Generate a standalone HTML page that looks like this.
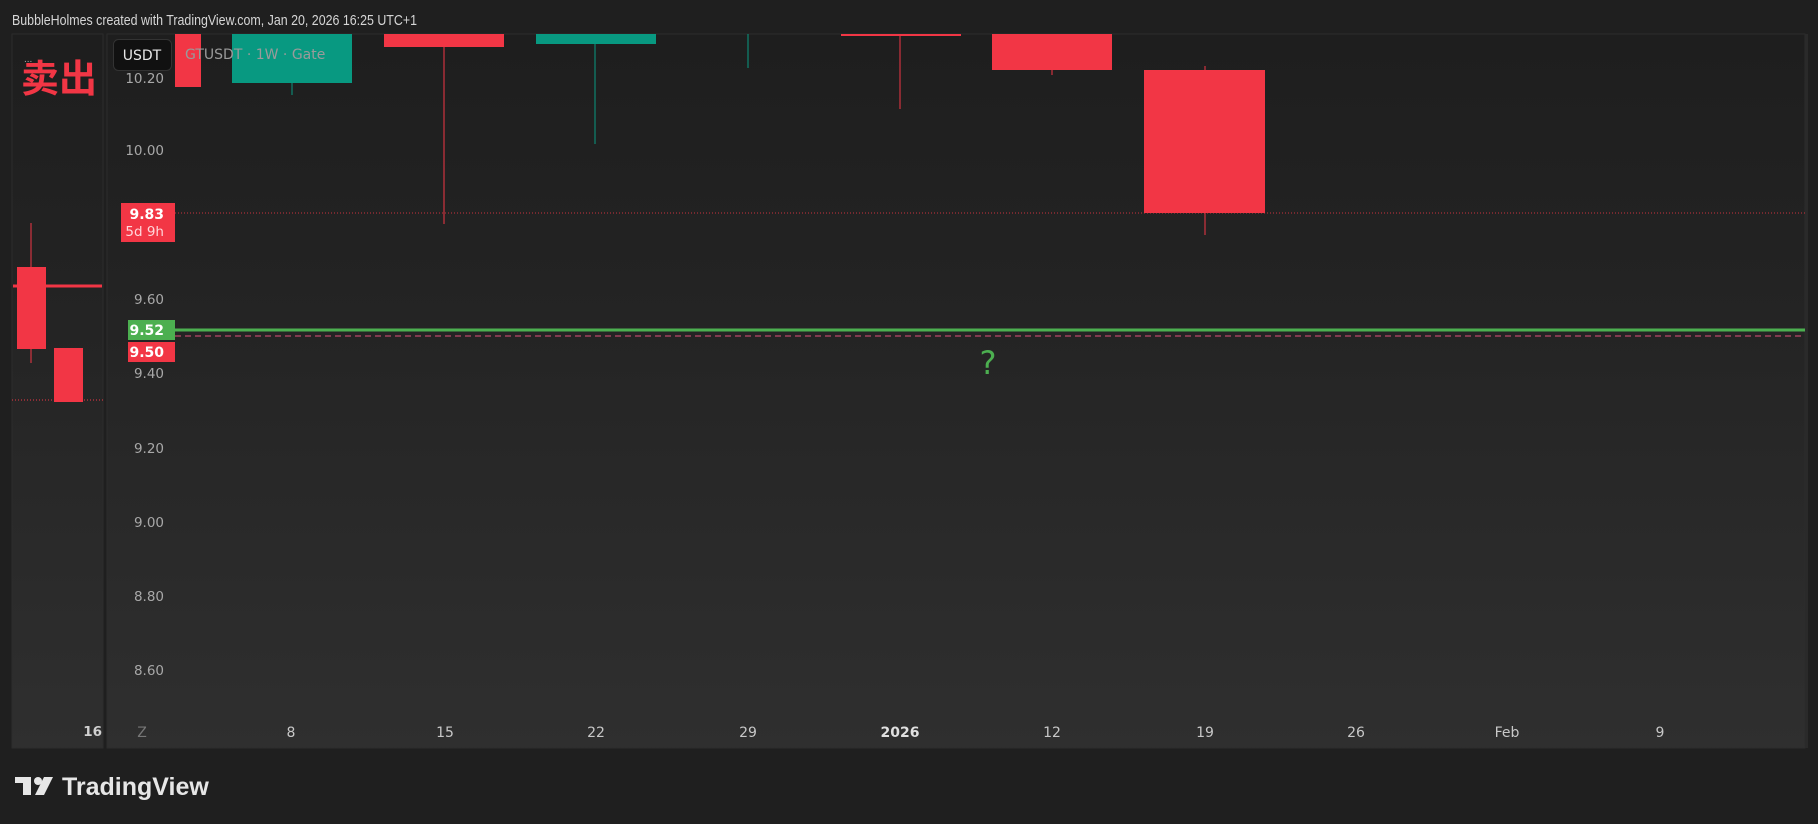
<!DOCTYPE html>
<html><head><meta charset="utf-8"><style>
html,body{margin:0;padding:0;background:#1f1f1f;width:1818px;height:824px;overflow:hidden;font-family:"Liberation Sans","Noto Sans CJK SC",sans-serif}
</style></head><body>
<svg width="1818" height="824" viewBox="0 0 1818 824" xmlns="http://www.w3.org/2000/svg" style="position:absolute;left:0;top:0">
<defs>
<linearGradient id="bg" x1="0" y1="0" x2="0" y2="1">
<stop offset="0" stop-color="#1e1e1e"/><stop offset="0.35" stop-color="#232323"/><stop offset="1" stop-color="#2f2f2f"/>
</linearGradient>
</defs>
<rect width="1818" height="824" fill="#1f1f1f"/>
<text x="12" y="25" fill="#d6d6d6" font-size="14.5" font-family="Liberation Sans, sans-serif" textLength="405" lengthAdjust="spacingAndGlyphs">BubbleHolmes created with TradingView.com, Jan 20, 2026 16:25 UTC+1</text>
<rect x="12" y="34" width="91" height="714" fill="url(#bg)" stroke="#2c2c2c" stroke-width="1"/>
<rect x="107" y="34" width="1698" height="714" fill="url(#bg)" stroke="#2c2c2c" stroke-width="1"/>
<rect x="1805" y="34" width="3" height="714" fill="#2a2a2a"/>
<line x1="31" y1="223" x2="31" y2="363" stroke="#f23645" stroke-width="1"/>
<rect x="17" y="267" width="29" height="82" fill="#f23645"/>
<line x1="13" y1="286" x2="102" y2="286" stroke="#f23645" stroke-width="3"/>
<rect x="54" y="348" width="29" height="54" fill="#f23645"/>
<line x1="12" y1="400" x2="103" y2="400" stroke="#f23645" stroke-width="1" stroke-dasharray="1,2"/>
<text x="21" y="92" fill="#f23645" font-size="38" font-weight="bold" font-family="Noto Sans CJK SC, sans-serif">卖出</text>
<text x="24" y="62" fill="#aaa" font-size="10">...</text>
<text x="102" y="736" fill="#d0d0d0" font-size="13.5" font-weight="bold" text-anchor="end" font-family="DejaVu Sans, sans-serif">16</text>
<rect x="175" y="34" width="26" height="53" fill="#f23645"/>
<line x1="292" y1="34" x2="292" y2="95" stroke="#089981"/>
<rect x="232" y="34" width="120" height="49" fill="#089981"/>
<line x1="444" y1="34" x2="444" y2="224" stroke="#f23645"/>
<rect x="384" y="34" width="120" height="13" fill="#f23645"/>
<line x1="595" y1="34" x2="595" y2="144" stroke="#089981"/>
<rect x="536" y="34" width="120" height="10" fill="#089981"/>
<line x1="748" y1="34" x2="748" y2="68" stroke="#089981"/>
<line x1="900" y1="34" x2="900" y2="109" stroke="#f23645"/>
<rect x="841" y="34" width="120" height="2" fill="#f23645"/>
<line x1="1052" y1="34" x2="1052" y2="75" stroke="#f23645"/>
<rect x="992" y="34" width="120" height="36" fill="#f23645"/>
<line x1="1205" y1="66" x2="1205" y2="235" stroke="#f23645"/>
<rect x="1144" y="70" width="121" height="143" fill="#f23645"/>
<line x1="175" y1="213" x2="1805" y2="213" stroke="#f23645" stroke-width="1" stroke-dasharray="1,2" opacity="0.8"/>
<line x1="175" y1="330" x2="1805" y2="330" stroke="#4caf50" stroke-width="3"/>
<line x1="175" y1="336" x2="1805" y2="336" stroke="#e0507a" stroke-width="1" stroke-dasharray="6,4"/>
<text x="988" y="374" fill="#4caf50" font-size="32" text-anchor="middle" font-family="DejaVu Sans, sans-serif">?</text>
<g fill="#a8a8a8" font-size="13.5" font-family="DejaVu Sans, sans-serif" text-anchor="end">
<text x="164" y="83">10.20</text>
<text x="164" y="155">10.00</text>
<text x="164" y="304">9.60</text>
<text x="164" y="378">9.40</text>
<text x="164" y="453">9.20</text>
<text x="164" y="527">9.00</text>
<text x="164" y="601">8.80</text>
<text x="164" y="675">8.60</text>
</g>
<rect x="113.5" y="39.5" width="58" height="31" rx="5" fill="#111" stroke="#333"/>
<text x="142" y="60" fill="#e8e8e8" font-size="14" text-anchor="middle" font-family="DejaVu Sans, sans-serif">USDT</text>
<text x="185" y="59" fill="#9a9a9a" font-size="14" font-family="DejaVu Sans, sans-serif">GTUSDT · 1W · Gate</text>
<rect x="121" y="203" width="54" height="39" fill="#f23645"/>
<text x="164" y="219" fill="#fff" font-size="14" font-weight="bold" text-anchor="end" font-family="DejaVu Sans, sans-serif">9.83</text>
<text x="164" y="236" fill="#ffd6da" font-size="13.5" text-anchor="end" font-family="DejaVu Sans, sans-serif">5d 9h</text>
<rect x="128" y="320" width="47" height="20" fill="#4caf50"/>
<text x="164" y="335" fill="#fff" font-size="14" font-weight="bold" text-anchor="end" font-family="DejaVu Sans, sans-serif">9.52</text>
<rect x="128" y="342" width="47" height="20" fill="#f23645"/>
<text x="164" y="357" fill="#fff" font-size="14" font-weight="bold" text-anchor="end" font-family="DejaVu Sans, sans-serif">9.50</text>
<g fill="#c8c8c8" font-size="14" font-family="DejaVu Sans, sans-serif" text-anchor="middle">
<text x="142" y="737" fill="#777">Z</text>
<text x="291" y="737">8</text>
<text x="445" y="737">15</text>
<text x="596" y="737">22</text>
<text x="748" y="737">29</text>
<text x="900" y="737" font-weight="bold" fill="#e0e0e0">2026</text>
<text x="1052" y="737">12</text>
<text x="1205" y="737">19</text>
<text x="1356" y="737">26</text>
<text x="1507" y="737">Feb</text>
<text x="1660" y="737">9</text>
</g>
<g fill="#e6e6e6">
<path d="M15 777h16v18h-8v-12h-8z"/>
<circle cx="38" cy="781" r="4"/>
<path d="M44 777h9l-9 18h-9z"/>
</g>
<text x="62" y="795" fill="#e6e6e6" font-size="25" font-weight="bold" font-family="Liberation Sans, sans-serif">TradingView</text>
</svg>
</body></html>
